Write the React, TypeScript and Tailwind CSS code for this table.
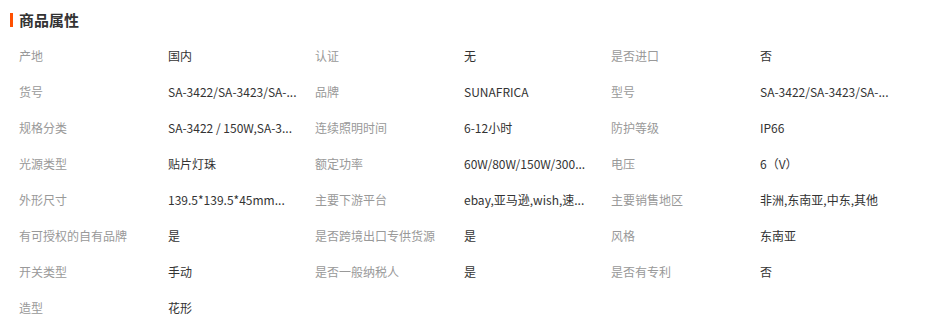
import React from "react";

const attrs: [string, string][] = [
    ["产地", "国内"],
    ["认证", "无"],
    ["是否进口", "否"],
    ["货号", "SA-3422/SA-3423/SA-..."],
    ["品牌", "SUNAFRICA"],
    ["型号", "SA-3422/SA-3423/SA-..."],
    ["规格分类", "SA-3422 / 150W,SA-3..."],
    ["连续照明时间", "6-12小时"],
    ["防护等级", "IP66"],
    ["光源类型", "贴片灯珠"],
    ["额定功率", "60W/80W/150W/300..."],
    ["电压", "6（V）"],
    ["外形尺寸", "139.5*139.5*45mm..."],
    ["主要下游平台", "ebay,亚马逊,wish,速..."],
    ["主要销售地区", "非洲,东南亚,中东,其他"],
    ["有可授权的自有品牌", "是"],
    ["是否跨境出口专供货源", "是"],
    ["风格", "东南亚"],
    ["开关类型", "手动"],
    ["是否一般纳税人", "是"],
    ["是否有专利", "否"],
    ["造型", "花形"],
];

const App = () => {
    return (
        <div className="w-[934px] h-[327px] bg-white font-['Noto_Sans_CJK_SC',sans-serif] overflow-hidden">
            <div className="flex items-center pl-[10px] pt-[11px]">
                <span className="w-[3px] h-[14px] bg-[#ff5000]" />
                <h2 className="ml-[6px] text-[15px] leading-[18px] font-bold text-[#333]">
                    商品属性
                </h2>
            </div>
            <div className="grid grid-cols-[149px_147px_149px_147px_149px_1fr] pl-[19px] pt-[9px]">
                {attrs.map(([k, v]) => (
                    <React.Fragment key={k}>
                        <div className="h-[36px] flex items-center text-[12px] text-[#999] whitespace-nowrap">
                            {k}
                        </div>
                        <div className="h-[36px] flex items-center text-[12px] text-[#333] whitespace-nowrap">
                            {v}
                        </div>
                    </React.Fragment>
                ))}
            </div>
        </div>
    );
};

export default App;
